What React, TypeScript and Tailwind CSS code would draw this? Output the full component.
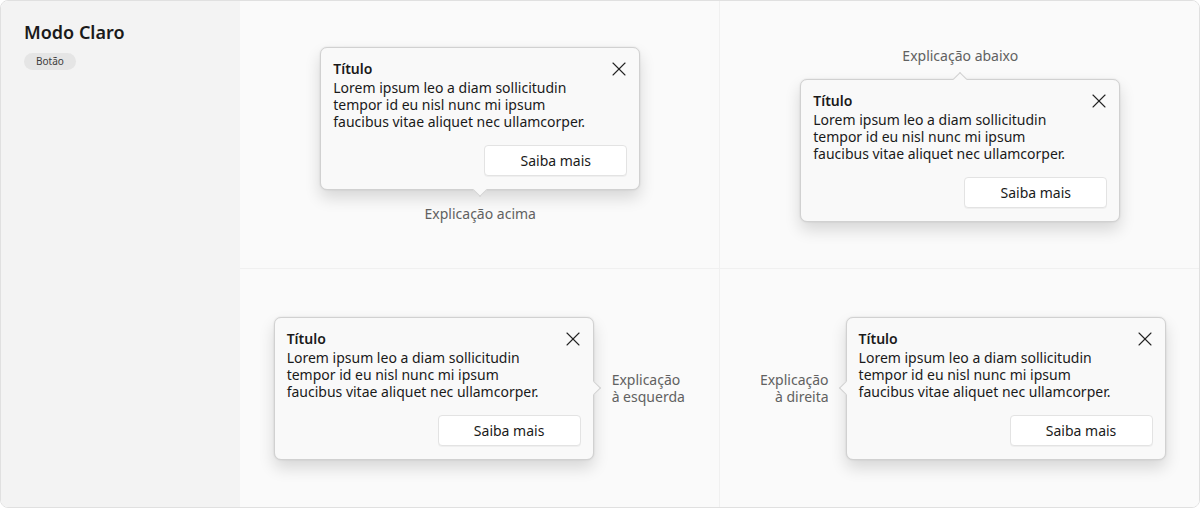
import { X } from "lucide-react";

type Beak = "top" | "bottom" | "left" | "right";

// Beak is a rotated square that sits over the card edge
const beakClass: Record<Beak, string> = {
	bottom: "bottom-[-6px] left-1/2 -ml-[5px] border-r border-b",
	top: "top-[-6px] left-1/2 -ml-[5px] border-l border-t",
	left: "left-[-6px] top-1/2 -mt-[5px] border-l border-b",
	right: "right-[-6px] top-1/2 -mt-[5px] border-t border-r",
};

function TeachingTip({ beak }: { beak: Beak }) {
	return (
		<div className="relative w-[320px] rounded-[7px] border border-[#d1d1d1] bg-[#f9f9f9] shadow-[0_8px_16px_rgba(0,0,0,0.14),0_0_2px_rgba(0,0,0,0.12)]">
			<div
				className={`absolute h-[10px] w-[10px] rotate-45 border-[#d1d1d1] bg-[#f9f9f9] ${beakClass[beak]}`}
			/>
			<div className="relative px-3 pt-[11px] pb-[13px]">
				<div className="flex items-start justify-between">
					<div>
						<div className="text-[14px] leading-[20px] font-semibold text-[#1a1a1a]">
							Título
						</div>
						<p className="text-[14px] leading-[17px] text-[#1a1a1a]">
							Lorem ipsum leo a diam sollicitudin
							<br />
							tempor id eu nisl nunc mi ipsum
							<br />
							faucibus vitae aliquet nec ullamcorper.
						</p>
					</div>
					<button className="-mt-[2px] -mr-[4px] text-[#242424]" aria-label="Fechar">
						<X size={24} strokeWidth={1.1} />
					</button>
				</div>
				<div className="mt-[15px] flex justify-end">
					<button className="h-[31px] w-[143px] rounded-[4px] border border-[#e3e3e3] bg-white text-[14px] text-[#1a1a1a] shadow-[0_1px_0_rgba(0,0,0,0.04)]">
						Saiba mais
					</button>
				</div>
			</div>
		</div>
	);
}

function Label({ children, align = "left" }: { children: React.ReactNode; align?: "left" | "right" | "center" }) {
	const a = align === "right" ? "text-right" : align === "center" ? "text-center" : "text-left";
	return <div className={`text-[14px] leading-[17px] text-[#616161] ${a}`}>{children}</div>;
}

export default function App() {
	return (
		<div
			className="flex h-[508px] w-[1200px] overflow-hidden rounded-[8px] border border-[#e0e0e0]"
			style={{ fontFamily: '"Noto Sans", "Open Sans", sans-serif' }}
		>
			<aside className="w-[239px] shrink-0 bg-[#f3f3f3] px-[23px] pt-[20px]">
				<h1 className="text-[18px] leading-[22px] font-semibold text-[#1a1a1a]">Modo Claro</h1>
				<span className="mt-[10px] inline-flex h-[17px] items-center rounded-full bg-[#e5e5e5] px-[12px] text-[10px] text-[#3d3d3d]">
					Botão
				</span>
			</aside>

			<main className="grid flex-1 grid-cols-2 grid-rows-[268px_1fr] bg-[#fafafa]">
				<div className="flex flex-col items-center justify-center gap-[15px] border-r border-b border-[#f0f0f0] pl-[2px]">
					<TeachingTip beak="bottom" />
					<Label align="center">Explicação acima</Label>
				</div>
				<div className="flex flex-col items-center justify-center gap-[15px] border-b border-[#f0f0f0] pl-[2px]">
					<Label align="center">Explicação abaixo</Label>
					<TeachingTip beak="top" />
				</div>
				<div className="flex items-center justify-center gap-[18px] border-r border-[#f0f0f0]">
					<TeachingTip beak="right" />
					<Label>
						Explicação
						<br />à esquerda
					</Label>
				</div>
				<div className="flex items-center justify-center gap-[17px] pl-[7px]">
					<Label align="right">
						Explicação
						<br />à direita
					</Label>
					<TeachingTip beak="left" />
				</div>
			</main>
		</div>
	);
}
